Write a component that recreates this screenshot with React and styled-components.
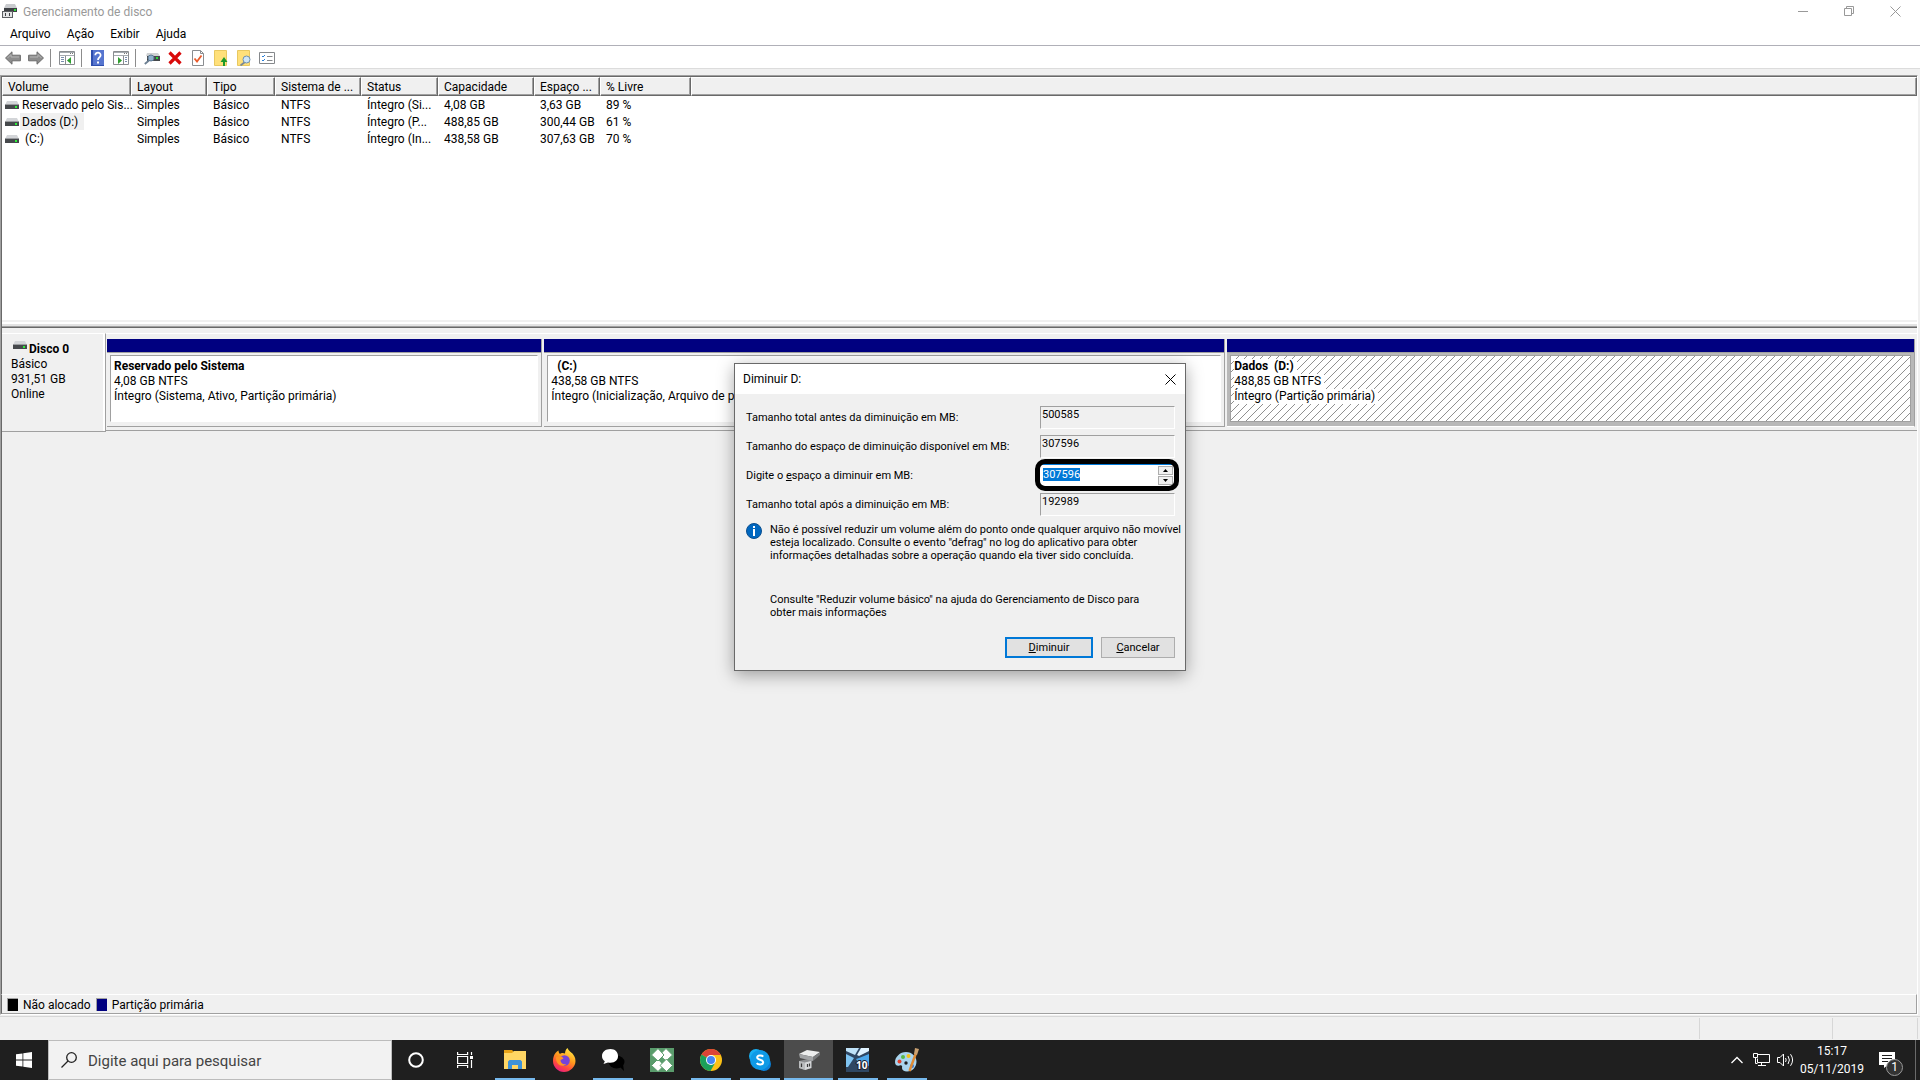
import React, { useEffect, useRef } from 'react';
import styled, { createGlobalStyle } from 'styled-components';

const GlobalStyle = createGlobalStyle`
  * {
    box-sizing: border-box;
  }

  body {
    margin: 0;
    background: #f0f0f0;
    color: #000;
    font-family: Roboto, 'Open Sans', sans-serif;
    font-size: 12px;
    overflow: hidden;
  }

  button, input {
    font-family: inherit;
    font-size: inherit;
    color: inherit;
    margin: 0;
    padding: 0;
    border: 0;
    border-radius: 0;
    background: none;
  }

  svg {
    display: block;
    flex: none;
  }
`;

const Desktop = styled.div`
  height: 100vh;
  display: flex;
  flex-direction: column;
`;

/* ---------- window chrome ---------- */

const TitleBar = styled.header`
  display: flex;
  align-items: center;
  height: 22px;
  padding: 0 2px;
  background: #fff;
  color: #999;
`;

const WindowTitle = styled.h1`
  flex: 1;
  margin: 0 0 0 5px;
  padding-top: 2px;
  font-size: 12px;
  font-weight: 400;
`;

const CaptionButton = styled.button`
  display: flex;
  align-items: center;
  justify-content: center;
  width: 46px;
  height: 20px;
`;

const MenuBar = styled.nav`
  display: flex;
  align-items: center;
  height: 24px;
  padding-left: 10px;
  gap: 16px;
  background: #fff;
  border-bottom: 1px solid #b0b0b8;
`;

const MenuItem = styled.button`
  line-height: 18px;
`;

const ToolBar = styled.div`
  display: flex;
  align-items: center;
  height: 23px;
  padding: 2px 0 0 1px;
  background: #fff;
  border-bottom: 1px solid #dcdcdc;
`;

const ToolButton = styled.button`
  display: flex;
  align-items: center;
  justify-content: center;
  width: 23px;
  height: 20px;
`;

const ToolDivider = styled.span`
  width: 1px;
  height: 18px;
  margin: 0 4px 0 3px;
  background: #8c8c8c;
`;

/* ---------- volume list ---------- */

const Frame = styled.main`
  flex: 1;
  min-height: 0;
  display: flex;
  flex-direction: column;
  margin-top: 6px;
  margin-right: 2px;
  border-top: 1px solid #a0a0a0;
  border-left: 1px solid #a0a0a0;
  border-right: 1px solid #fff;
  border-bottom: 1px solid #fff;
`;

const VolumePane = styled.section`
  flex: none;
  height: 244px;
  background: #fff;
  border-top: 1px solid #696969;
  border-left: 1px solid #696969;
`;

const VolumeTable = styled.table`
  width: 100%;
  table-layout: fixed;
  border-collapse: separate;
  border-spacing: 0;
`;

const HeadCell = styled.th`
  height: 19px;
  padding: 0 4px 0 5px;
  background: #f0f0f0;
  border-left: 1px solid #fff;
  border-top: 1px solid #fff;
  border-right: 1px solid #696969;
  border-bottom: 1px solid #696969;
  box-shadow: inset -1px -1px 0 #a0a0a0;
  font-weight: 400;
  line-height: 16px;
  text-align: left;
  white-space: nowrap;
`;

const Cell = styled.td`
  height: 17px;
  padding: ${(p) => (p.$first ? '0 0 0 3px' : '2px 0 0 6px')};
  line-height: 15px;
  white-space: pre;
`;

const VolumeName = styled.div`
  display: flex;
  align-items: center;
  gap: 1px;
`;

const NameText = styled.span`
  padding: 2px ${(p) => (p.$selected ? 6 : 0)}px 0 2px;
  background: ${(p) => (p.$selected ? '#f0f0f0' : 'transparent')};
`;

const Splitter = styled.div`
  flex: none;
  height: 8px;
  background: #f0f0f0;
  border-left: 1px solid #696969;
  border-bottom: 1px solid #696969;
  box-shadow: inset 0 -1px 0 #a0a0a0, inset 0 -3px 0 #e3e3e3, inset 0 -5px 0 #fff;
`;

/* ---------- disk map ---------- */

const DiskPane = styled.section`
  flex: 1;
  min-height: 0;
  padding-top: 5px;
  border-left: 1px solid #696969;
`;

const DiskRow = styled.div`
  display: flex;
  height: 99px;
`;

const DiskLabel = styled.div`
  width: 104px;
  padding: 7px 0 0 9px;
  border-top: 1px solid #fff;
  border-right: 1px solid #a0a0a0;
  border-bottom: 1px solid #a0a0a0;
  box-shadow: inset -2px 0 0 #fff;
  line-height: 15px;
`;

const DiskName = styled.div`
  display: flex;
  align-items: flex-start;
  gap: 2px;
  padding-left: 2px;
  line-height: 16px;
  font-weight: 700;
`;

const Partitions = styled.div`
  flex: 1;
  display: flex;
  gap: 2px;
  height: 98px;
  padding: 5px 2px 3px 1px;
  border-top: 1px solid #fff;
  border-bottom: 1px solid #a0a0a0;
`;

const Partition = styled.div`
  flex: ${(p) => p.$share} 1 0;
  min-width: 0;
  display: flex;
  flex-direction: column;
  border-bottom: 1px solid ${(p) => (p.$selected ? '#fff' : '#a0a0a0')};
  border-right: 1px solid #a0a0a0;
`;

const PartitionBar = styled.div`
  height: 13px;
  background: #000080;
`;

const PartitionBody = styled.div`
  flex: 1;
  padding: 2px 3px 4px 3px;
  border-top: 1px solid #a0a0a0;
  background: ${(p) => (p.$selected ? '#b8b8b8' : '#f0f0f0')};
`;

const PartitionInfo = styled.div`
  height: 100%;
  display: flex;
  flex-direction: column;
  align-items: flex-start;
  padding: 3px 0 0 3px;
  border: 1px solid #a0a0a0;
  border-right-color: ${(p) => (p.$selected ? '#a0a0a0' : '#fff')};
  border-bottom-color: ${(p) => (p.$selected ? '#a0a0a0' : '#fff')};
  background-color: #fff;
  background-image: ${(p) =>
    p.$selected
      ? 'linear-gradient(135deg, transparent 45%, #909090 45%, #909090 54%, transparent 54%)'
      : 'none'};
  background-size: 8px 8px;
  line-height: 15px;
  white-space: pre;
  overflow: hidden;
`;

const InfoLine = styled.span`
  padding-right: 3px;
  background: #fff;
  font-weight: ${(p) => (p.$strong ? 700 : 400)};
`;

const Legend = styled.footer`
  flex: none;
  display: flex;
  align-items: center;
  gap: 5px;
  height: 20px;
  padding: 1px 0 0 5px;
  border-left: 1px solid #696969;
  border-top: 1px solid #fff;
  border-bottom: 1px solid #a0a0a0;
  border-right: 1px solid #a0a0a0;
`;

const Swatch = styled.span`
  width: 11px;
  height: 13px;
  border-top: 1px solid #a0a0a0;
  border-left: 1px solid #a0a0a0;
  background: ${(p) => p.$color};
`;

const StatusBar = styled.div`
  flex: none;
  display: flex;
  justify-content: flex-end;
  height: 24px;
  margin-top: 1px;
  padding: 1px 2px 1px 0;
  border-top: 1px solid #d7d7d7;
`;

const StatusPart = styled.span`
  width: ${(p) => p.$width}px;
  border-right: 1px solid #d7d7d7;
`;

/* ---------- shrink dialog ---------- */

const Dialog = styled.form`
  position: absolute;
  top: 363px;
  left: 50%;
  transform: translateX(-50%);
  width: 452px;
  border: 1px solid #696969;
  background: #f0f0f0;
  box-shadow: 0 4px 16px rgba(0, 0, 0, 0.35);
  font-size: 11px;
`;

const DialogTitle = styled.div`
  display: flex;
  align-items: center;
  justify-content: space-between;
  height: 30px;
  padding: 0 9px 0 8px;
  background: #fff;
  font-size: 12px;
`;

const DialogBody = styled.div`
  padding: 12px 10px 12px 11px;
`;

const FieldGrid = styled.div`
  display: grid;
  grid-template-columns: 1fr 135px;
  row-gap: 6px;
`;

const FieldLabel = styled.label`
  line-height: 23px;
`;

const ReadOnlyField = styled.input`
  width: 100%;
  height: 23px;
  padding: 0 0 7px 1px;
  border: 1px solid #fff;
  border-top-color: #a0a0a0;
  border-left-color: #a0a0a0;
`;

const SpinField = styled.div`
  position: relative;
  display: flex;
  width: 134px;
  height: 22px;
  background: #fff;
  border-top: 1px solid #0078d7;

  &::after {
    content: '';
    position: absolute;
    inset: -6px -5px -5px;
    border: 5px solid #000;
    border-radius: 10px;
    pointer-events: none;
  }
`;

const SpinInput = styled.input`
  flex: 1;
  min-width: 0;
  padding: 0 0 3px 3px;
  outline: none;

  &::selection {
    background: #0078d7;
    color: #fff;
  }
`;

const SpinButtons = styled.div`
  display: flex;
  flex-direction: column;
  gap: 1px;
  padding: 1px;
`;

const SpinButton = styled.button`
  display: flex;
  align-items: center;
  justify-content: center;
  width: 15px;
  height: 9px;
  border: 1px solid #adadad;
  background: #f0f0f0;
`;

const Notice = styled.div`
  display: flex;
  gap: 8px;
  margin-top: 7px;
  line-height: 13px;
`;

const NoticeText = styled.div`
  flex: 1;

  p {
    margin: 0 0 31px;
    white-space: pre;
  }

  p:last-child {
    margin: 0;
  }
`;

const DialogActions = styled.div`
  display: flex;
  justify-content: flex-end;
  gap: 8px;
  margin-top: 18px;
`;

const DialogButton = styled.button`
  width: ${(p) => (p.$primary ? 88 : 74)}px;
  height: 21px;
  background: #e1e1e1;
  border: ${(p) => (p.$primary ? '2px solid #0078d7' : '1px solid #adadad')};
`;

/* ---------- taskbar ---------- */

const TaskBar = styled.footer`
  flex: none;
  display: flex;
  align-items: stretch;
  height: 40px;
  background: #1f1f1f;
  color: #fff;
`;

const TaskButton = styled.button`
  position: relative;
  display: flex;
  align-items: center;
  justify-content: center;
  width: ${(p) => p.$width || 49}px;
  background: ${(p) => (p.$active ? '#4c4c4c' : 'transparent')};

  &::after {
    content: '';
    position: absolute;
    bottom: 0;
    left: ${(p) => (p.$active ? 0 : 5)}px;
    right: ${(p) => (p.$active ? 0 : 4)}px;
    height: 2px;
    background: ${(p) => (p.$running ? '#76b9ed' : 'transparent')};
  }
`;

const SearchBox = styled.label`
  display: flex;
  align-items: center;
  gap: 11px;
  width: 344px;
  padding-left: 12px;
  background: #f2f2f2;
  border: 1px solid #bcbcbc;
`;

const SearchInput = styled.input`
  flex: 1;
  min-width: 0;
  padding-top: 2px;
  font-size: 15px;
  outline: none;

  &::placeholder {
    color: #444;
    opacity: 1;
  }
`;

const Tray = styled.div`
  display: flex;
  align-items: center;
  margin-left: auto;
`;

const TrayButton = styled.button`
  display: flex;
  align-items: center;
  justify-content: center;
  width: 24px;
  height: 40px;
`;

const Clock = styled.time`
  width: 70px;
  text-align: center;
  line-height: 18px;
`;

const ActionCenter = styled.button`
  position: relative;
  display: flex;
  align-items: center;
  justify-content: center;
  width: 40px;
  height: 40px;
`;

const Badge = styled.span`
  position: absolute;
  left: 19px;
  top: 19px;
  width: 17px;
  height: 17px;
  border: 1px solid #9a9a9a;
  border-radius: 50%;
  background: #333;
  font-size: 12px;
  line-height: 15px;
  text-align: center;
`;

const ShowDesktop = styled.button`
  width: 5px;
  margin-left: 8px;
  border-left: 1px solid #6a6a6a;
`;

/* ---------- icons ---------- */

const DriveIcon = () => (
  <svg width="14" height="8" viewBox="0 0 14 8">
    <path d="M2 0h10l2 4H0z" fill="#d3d5d8" />
    <path d="M0 3h14v5H0z" fill="#46494c" />
    <path d="M0 3h14v1H0z" fill="#9b9da0" />
    <path d="M10 5h2v2h-2z" fill="#2df03a" />
  </svg>
);

const AppIcon = () => (
  <svg width="16" height="16" viewBox="0 0 16 16">
    <path d="M4 1h9l2 4H2z" fill="#c9cbce" />
    <path d="M2 5h13v4H2z" fill="#3d4043" />
    <path d="M12 6h2v2h-2z" fill="#2bdc3a" />
    <path d="M0 8h11v7H0z" fill="#5c5f62" />
    <path d="M1 9h9v5H1z" fill="#e4e5e6" />
    <path d="M3 10h1v3H3zM7 10h1v3H7z" fill="#3d4043" />
  </svg>
);

const ArrowIcon = ({ right }) => (
  <svg width="16" height="14" viewBox="0 0 16 14">
    <path
      d={right ? 'M15.5 7L9 .8v3.4H.6v5.6H9v3.4z' : 'M.5 7L7 .8v3.4h8.4v5.6H7v3.4z'}
      fill="#8d8d8d"
      stroke="#6d6d6d"
    />
    <path d={right ? 'M2 6h8V3.5L13.5 7' : 'M14 6H6V3.5L2.5 7'} fill="none" stroke="#b5b5b5" />
  </svg>
);

const PaneIcon = ({ right }) => (
  <svg width="16" height="14" viewBox="0 0 16 14">
    <path d="M.5.5h15v13H.5z" fill="#fff" stroke="#8a8d90" />
    <path d="M1 1h14v1H1zM1 4h14v1H1z" fill="#a6abb0" />
    <path d="M11 2h1v1h-1zM13 2h1v1h-1z" fill="#777" />
    <path d={right ? 'M10.5 5v8' : 'M6.5 5v8'} stroke="#8a8d90" />
    <path
      d={right ? 'M12 6.5h2M12 8.5h2M12 10.5h2' : 'M2 6.5h3M2 8.5h3M2 10.5h3'}
      stroke="#7a8fae"
    />
    <path d={right ? 'M5 6l4 3.5L5 13z' : 'M12 6L8 9.5l4 3.5z'} fill="#2f9e2f" />
  </svg>
);

const HelpIcon = () => (
  <svg width="13" height="16" viewBox="0 0 13 16">
    <path d="M0 0h13v16H0z" fill="#2f4fae" />
    <path d="M2 0h11v15H2z" fill="#5675cf" />
    <path d="M4.3 5.2C4.3 1.8 9.8 2 9.6 5.2 9.5 7.4 7 7.4 7 10" fill="none" stroke="#fff" strokeWidth="1.8" />
    <path d="M6 11.5h2v2H6z" fill="#fff" />
  </svg>
);

const RescanIcon = () => (
  <svg width="16" height="14" viewBox="0 0 16 14">
    <path d="M3 2h11l2 3H2z" fill="#cfd1d3" />
    <path d="M3 5h13v5H3z" fill="#45484b" />
    <path d="M12 6h2v2h-2z" fill="#2bdc3a" />
    <path d="M5.5 9L.8 13" stroke="#6c7f92" strokeWidth="1.8" />
    <circle cx="7" cy="7" r="3" fill="#8fb0cd" stroke="#5f7b96" />
  </svg>
);

const DeleteIcon = () => (
  <svg width="14" height="14" viewBox="0 0 14 14">
    <path d="M1.5 1.5l11 11M12.5 1.5l-11 11" stroke="#d90a0a" strokeWidth="3.2" />
  </svg>
);

const CheckPageIcon = () => (
  <svg width="12" height="16" viewBox="0 0 12 16">
    <path d="M.5.5h8l3 3v12H.5z" fill="#fff" stroke="#8a8d90" />
    <path d="M8.5.5v3h3" fill="none" stroke="#8a8d90" />
    <path d="M2.5 8.5l2.5 3 4.5-6" fill="none" stroke="#ea5b2b" strokeWidth="1.8" />
  </svg>
);

const FolderUpIcon = () => (
  <svg width="14" height="16" viewBox="0 0 14 16">
    <path d="M.5.5h12v15H.5z" fill="#ffe07a" stroke="#e8c860" />
    <path d="M9 16v-4H6.5L10 7l3.500 5H11v4z" fill="#1d9a28" />
  </svg>
);

const FolderFindIcon = () => (
  <svg width="14" height="16" viewBox="0 0 14 16">
    <path d="M.5.5h12v15H.5z" fill="#ffe07a" stroke="#e8c860" />
    <path d="M8 12l-4.5 3.5" stroke="#7b8894" strokeWidth="1.8" />
    <circle cx="9.5" cy="9.5" r="3.5" fill="#cfe6f7" stroke="#6f90ad" />
  </svg>
);

const ListIcon = () => (
  <svg width="16" height="12" viewBox="0 0 16 12">
    <path d="M.5.5h15v11H.5z" fill="#fff" stroke="#85888b" />
    <path d="M8 4.5h5.5M8 8.5h5.5" stroke="#85888b" />
    <path d="M3 4l1 1 2-2M3 8l1 1 2-2" fill="none" stroke="#2b7fd6" />
  </svg>
);

const InfoIcon = () => (
  <svg width="16" height="16" viewBox="0 0 16 16">
    <circle cx="8" cy="8" r="7.5" fill="#0067c0" stroke="#0a4f8f" />
    <path d="M7 3h2v2H7zM7 6h2v7H7z" fill="#fff" />
  </svg>
);

const CloseIcon = ({ color }) => (
  <svg width="11" height="11" viewBox="0 0 11 11">
    <path d="M.5.5l10 10M10.5.5l-10 10" stroke={color} />
  </svg>
);

const MinimizeIcon = () => (
  <svg width="10" height="11" viewBox="0 0 10 11">
    <path d="M0 5.5h10" stroke="#999" />
  </svg>
);

const RestoreIcon = () => (
  <svg width="10" height="10" viewBox="0 0 10 10">
    <path d="M.5 2.5h7v7h-7zM2.5 2.5v-2h7v7h-2" fill="none" stroke="#999" />
  </svg>
);

const WindowsIcon = () => (
  <svg width="16" height="16" viewBox="0 0 16 16" fill="#fff">
    <path d="M0 2.3l6.5-.9v6.2H0zM7.3 1.3L16 0v7.6H7.3zM0 8.4h6.5v6.2L0 13.7zM7.3 8.4H16V16l-8.7-1.3z" />
  </svg>
);

const SearchIcon = () => (
  <svg width="16" height="16" viewBox="0 0 16 16" fill="none" stroke="#222" strokeWidth="1.3">
    <circle cx="10.5" cy="5.5" r="4.8" />
    <path d="M7 9L.5 15.5" />
  </svg>
);

const CortanaIcon = () => (
  <svg width="16" height="16" viewBox="0 0 16 16">
    <circle cx="8" cy="8" r="6.8" fill="none" stroke="#fff" strokeWidth="2" />
  </svg>
);

const TaskViewIcon = () => (
  <svg width="17" height="16" viewBox="0 0 17 16" fill="none" stroke="#fff" strokeWidth="1.2">
    <path d="M.6 0v2.5h10V0M.6 16v-2.5h10V16M.6 4.5h10v7H.6zM14.5 0v3M14.5 8v8" />
    <path d="M13 4h3v3h-3z" fill="#fff" stroke="none" />
  </svg>
);

const ExplorerIcon = () => (
  <svg width="22" height="20" viewBox="0 0 22 20">
    <path d="M0 0h8l2 2h12v17H0z" fill="#e8a317" />
    <path d="M0 3h8l2-2h12v18H0z" fill="#ffd664" />
    <path d="M4 11.5L5.5 10h11l1.5 1.5V19h-4v-4H8v4H4z" fill="#3e92d8" />
  </svg>
);

const FirefoxIcon = () => (
  <svg width="24" height="24" viewBox="0 0 24 24">
    <defs>
      <linearGradient id="fox" x1="0.8" y1="0" x2="0.3" y2="1">
        <stop offset="0" stopColor="#fff04a" />
        <stop offset="0.45" stopColor="#ff9a1c" />
        <stop offset="0.75" stopColor="#ff4a3d" />
        <stop offset="1" stopColor="#e81c80" />
      </linearGradient>
    </defs>
    <path
      d="M3.5 5C2 7 1 9.5 1 13c0 6 5 11 11 11s11.5-5 11.5-11c0-4-2-6-3.5-8 0 0-3-1.5-4.5-5-2 1.5-2.500 4-2.500 5.500C11 4.500 9 5 8 6 7 5 6.500 4 6.500 2.500 5.500 3 4.500 4 3.500 5z"
      fill="url(#fox)"
    />
    <circle cx="12.5" cy="12.5" r="5.3" fill="#7543d8" />
    <path d="M4 9c3-1.5 6-1 7.5 1.5L8.5 12c0 3 2.5 5 6 4-4 4-11 1-10.5-7z" fill="#ff9422" />
  </svg>
);

const ChatIcon = () => (
  <svg width="24" height="24" viewBox="0 0 24 24">
    <ellipse cx="15.5" cy="14" rx="8" ry="6.5" fill="#000" />
    <path d="M18 18l5 5-1-7z" fill="#000" />
    <path
      d="M9.5 1C4.5 1 1 3.8 1 8c0 2.4 1 4 2.8 5.2L2.5 16 7 14.5c6.500 1 10-2 10-6.500C17 3.800 14 1 9.500 1z"
      fill="#fff"
    />
  </svg>
);

const CloverIcon = () => (
  <svg width="24" height="24" viewBox="0 0 24 24">
    <path d="M0 0h24v24H0z" fill="#5a9c6c" />
    <g fill="#fff" stroke="#5a9c6c">
      <path d="M16 .5l6.5 6.500-6.500 6-6.500-6z" />
      <path d="M8 11l6 6.500L8 23.500l-6.500-6z" />
      <path d="M8 .5l6 6.500-6 6-6.500-6z" />
      <path d="M16.500 11l6 6.500-6 6-6.500-6z" />
    </g>
  </svg>
);

const ChromeIcon = () => (
  <svg width="22" height="22" viewBox="0 0 22 22">
    <circle cx="11" cy="11" r="11" fill="#fbc116" />
    <path d="M11 11L1.5 5.5A11 11 0 0 1 20.5 5.5L20.8 6H11z" fill="#dc4437" />
    <path d="M1.5 5.5A11 11 0 0 0 10.5 22l4.8-8.5L11 11z" fill="#1ba05a" />
    <circle cx="11" cy="11" r="5" fill="#fff" />
    <circle cx="11" cy="11" r="4" fill="#4686f3" />
  </svg>
);

const SkypeIcon = () => (
  <svg width="22" height="22" viewBox="0 0 22 22">
    <circle cx="7" cy="7" r="7" fill="#18b0f4" />
    <circle cx="15" cy="15" r="7" fill="#0a80d8" />
    <circle cx="11" cy="11" r="10" fill="#0f9ae6" />
    <path
      d="M14.2 7.6C13 6.2 8.2 6 8.2 8.6c0 2.8 6 1.6 6 4.7 0 3-5.2 2.6-6.5.9"
      fill="none"
      stroke="#fff"
      strokeWidth="2"
    />
  </svg>
);

const DiskManagerIcon = () => (
  <svg width="24" height="22" viewBox="0 0 24 22">
    <path d="M2 12l9-2 4 1v8l-7 2-6-2z" fill="#8d8f91" />
    <path d="M2 12l6 1.5V21l-6-2z" fill="#b9bbbd" />
    <path d="M8 13.500l6-1.500v7l-6 2z" fill="#d6d8da" />
    <path d="M4.500 14.500v3.500M10.500 15v3M12.500 14.500v3" stroke="#3a3a3a" strokeWidth="1.2" />
    <path d="M2 5l8-4 13 2-7 5z" fill="#eceded" />
    <path d="M2 5l14 3v4L3 9z" fill="#a2a4a6" />
    <path d="M16 8l7-5v3l-7 6z" fill="#77797b" />
  </svg>
);

const WindowsTenIcon = () => (
  <svg width="23" height="24" viewBox="0 0 23 24">
    <path d="M0 0h23v24H0z" fill="#2f4763" />
    <path d="M0 0h13L9 7 0 3z" fill="#bfe2f8" />
    <path d="M15 0h8v3L13 8l-2-1z" fill="#e0f3ff" />
    <path d="M0 6l8 4-6 9H0z" fill="#7fc4f2" />
    <path d="M10 11l3-1 10-4v12l-11-4z" fill="#4ba6ea" />
    <text
      x="10"
      y="21"
      fill="#fff"
      stroke="#223"
      strokeWidth="2"
      paintOrder="stroke"
      fontFamily="Open Sans"
      fontWeight="700"
      fontSize="10"
    >
      10
    </text>
  </svg>
);

const PaintIcon = () => (
  <svg width="24" height="24" viewBox="0 0 24 24">
    <path
      d="M11 4C5 4 0 9 0 14c0 4 3 4 4.5 3.5C7 17 7.5 18 7 20c0 2 2 3.5 5 3.5 6 0 9.500-5 9.500-10S17 4 11 4z"
      fill="#a9d4ee"
    />
    <circle cx="4.5" cy="13.5" r="2" fill="#e3422e" />
    <circle cx="8" cy="9" r="2" fill="#58b947" />
    <circle cx="13.5" cy="8" r="2" fill="#f5c21c" />
    <circle cx="11" cy="15" r="1.7" fill="#1f1f1f" />
    <circle cx="17" cy="18" r="2" fill="#3a74c9" />
    <path d="M21 5l-6.5 18" stroke="#e08b34" strokeWidth="2.4" />
    <path d="M20 0l4 1-2 6-3-1z" fill="#c9a070" />
  </svg>
);

const ChevronUpIcon = () => (
  <svg width="12" height="8" viewBox="0 0 12 8">
    <path d="M.5 7L6 1.5 11.5 7" fill="none" stroke="#fff" strokeWidth="1.3" />
  </svg>
);

const NetworkIcon = () => (
  <svg width="17" height="14" viewBox="0 0 17 14" fill="none" stroke="#fff">
    <path d="M4.5 1.5h12v8h-12v-4M8.5 9.5v3M5 12.5h8M2.5 5v5.5h2" />
    <path d="M.5.5h4v4h-4z" />
  </svg>
);

const VolumeIcon = () => (
  <svg width="17" height="14" viewBox="0 0 17 14" fill="none" stroke="#fff">
    <path d="M.5 4.5H3L6.5 1v12L3 9.5H.5zM8.5 5q1.4 2 0 4M11 3q2.8 4 0 8M13.5 1.2q4.2 5.8 0 11.6" />
  </svg>
);

const NotificationIcon = () => (
  <svg width="16" height="16" viewBox="0 0 16 16">
    <path d="M0 0h16v13H9l-4 3v-3H0z" fill="#fff" />
    <path d="M3 3.5h10M3 6.5h10M3 9.5h6" stroke="#1f1f1f" />
  </svg>
);

const Triangle = ({ down }) => (
  <svg width="5" height="3" viewBox="0 0 5 3">
    <path d={down ? 'M0 0h5L2.5 3z' : 'M0 3h5L2.5 0z'} fill="#000" />
  </svg>
);

/* ---------- data ---------- */

const columns = [
  { title: 'Volume', width: 129 },
  { title: 'Layout', width: 76 },
  { title: 'Tipo', width: 68 },
  { title: 'Sistema de ...', width: 86 },
  { title: 'Status', width: 77 },
  { title: 'Capacidade', width: 96 },
  { title: 'Espaço ...', width: 66 },
  { title: '% Livre', width: 91 },
  { title: '' },
];

const volumes = [
  ['Reservado pelo Sis...', 'Simples', 'Básico', 'NTFS', 'Íntegro (Si...', '4,08 GB', '3,63 GB', '89 %'],
  ['Dados (D:)', 'Simples', 'Básico', 'NTFS', 'Íntegro (P...', '488,85 GB', '300,44 GB', '61 %'],
  [' (C:)', 'Simples', 'Básico', 'NTFS', 'Íntegro (In...', '438,58 GB', '307,63 GB', '70 %'],
];

const partitions = [
  { name: 'Reservado pelo Sistema', size: '4,08 GB NTFS', status: 'Íntegro (Sistema, Ativo, Partição primária)', share: 435 },
  { name: '  (C:)', size: '438,58 GB NTFS', status: 'Íntegro (Inicialização, Arquivo de paginação, Despejo de falha, Partição primária)', share: 681 },
  { name: 'Dados  (D:)', size: '488,85 GB NTFS', status: 'Íntegro (Partição primária)', share: 688, selected: true },
];

const tools = [
  ['Voltar', <ArrowIcon />],
  ['Avançar', <ArrowIcon right />],
  null,
  ['Mostrar árvore', <PaneIcon />],
  null,
  ['Ajuda', <HelpIcon />],
  ['Mostrar ações', <PaneIcon right />],
  null,
  ['Examinar discos', <RescanIcon />],
  ['Excluir', <DeleteIcon />],
  ['Propriedades', <CheckPageIcon />],
  ['Abrir', <FolderUpIcon />],
  ['Explorar', <FolderFindIcon />],
  ['Lista', <ListIcon />],
];

const tasks = [
  { label: 'Cortana', icon: <CortanaIcon />, width: 48 },
  { label: 'Visão de tarefas', icon: <TaskViewIcon />, width: 50 },
  { label: 'Explorador de Arquivos', icon: <ExplorerIcon />, running: true },
  { label: 'Firefox', icon: <FirefoxIcon /> },
  { label: 'Chat', icon: <ChatIcon />, running: true },
  { label: 'Trevo', icon: <CloverIcon /> },
  { label: 'Chrome', icon: <ChromeIcon />, running: true },
  { label: 'Skype', icon: <SkypeIcon />, running: true },
  { label: 'Gerenciamento de disco', icon: <DiskManagerIcon />, running: true, active: true },
  { label: 'Windows 10', icon: <WindowsTenIcon />, running: true },
  { label: 'Paint', icon: <PaintIcon />, running: true },
];

const ShrinkDialog = () => {
  const amount = useRef(null);

  useEffect(() => {
    amount.current.focus();
    amount.current.select();
  }, []);

  return (
    <Dialog role="dialog" aria-label="Diminuir D:" onSubmit={(e) => e.preventDefault()}>
      <DialogTitle>
        <span>Diminuir D:</span>
        <button type="button" aria-label="Fechar">
          <CloseIcon color="#000" />
        </button>
      </DialogTitle>
      <DialogBody>
        <FieldGrid>
          <FieldLabel htmlFor="before">Tamanho total antes da diminuição em MB:</FieldLabel>
          <ReadOnlyField id="before" readOnly value="500585" />
          <FieldLabel htmlFor="available">Tamanho do espaço de diminuição disponível em MB:</FieldLabel>
          <ReadOnlyField id="available" readOnly value="307596" />
          <FieldLabel htmlFor="amount">
            Digite o <u>e</u>spaço a diminuir em MB:
          </FieldLabel>
          <SpinField>
            <SpinInput id="amount" ref={amount} defaultValue="307596" />
            <SpinButtons>
              <SpinButton type="button" aria-label="Aumentar">
                <Triangle />
              </SpinButton>
              <SpinButton type="button" aria-label="Reduzir">
                <Triangle down />
              </SpinButton>
            </SpinButtons>
          </SpinField>
          <FieldLabel htmlFor="after">Tamanho total após a diminuição em MB:</FieldLabel>
          <ReadOnlyField id="after" readOnly value="192989" />
        </FieldGrid>
        <Notice>
          <InfoIcon />
          <NoticeText>
            <p>
              {'Não é possível reduzir um volume além do ponto onde qualquer arquivo não movível\nesteja localizado. Consulte o evento "defrag" no log do aplicativo para obter\ninformações detalhadas sobre a operação quando ela tiver sido concluída.'}
            </p>
            <p>{'Consulte "Reduzir volume básico" na ajuda do Gerenciamento de Disco para\nobter mais informações'}</p>
          </NoticeText>
        </Notice>
        <DialogActions>
          <DialogButton $primary>
            <u>D</u>iminuir
          </DialogButton>
          <DialogButton type="button">
            <u>C</u>ancelar
          </DialogButton>
        </DialogActions>
      </DialogBody>
    </Dialog>
  );
};

const App = () => {
  return (
    <Desktop>
      <GlobalStyle />
      <TitleBar>
        <AppIcon />
        <WindowTitle>Gerenciamento de disco</WindowTitle>
        <CaptionButton aria-label="Minimizar">
          <MinimizeIcon />
        </CaptionButton>
        <CaptionButton aria-label="Restaurar">
          <RestoreIcon />
        </CaptionButton>
        <CaptionButton aria-label="Fechar janela">
          <CloseIcon color="#999" />
        </CaptionButton>
      </TitleBar>
      <MenuBar>
        <MenuItem>Arquivo</MenuItem>
        <MenuItem>Ação</MenuItem>
        <MenuItem>Exibir</MenuItem>
        <MenuItem>Ajuda</MenuItem>
      </MenuBar>
      <ToolBar>
        {tools.map((tool, i) =>
          tool ? (
            <ToolButton key={i} aria-label={tool[0]}>
              {tool[1]}
            </ToolButton>
          ) : (
            <ToolDivider key={i} />
          )
        )}
      </ToolBar>

      <Frame>
        <VolumePane>
          <VolumeTable>
            <colgroup>
              {columns.map((c, i) => (
                <col key={i} width={c.width} />
              ))}
            </colgroup>
            <thead>
              <tr>
                {columns.map((c, i) => (
                  <HeadCell key={i}>{c.title}</HeadCell>
                ))}
              </tr>
            </thead>
            <tbody>
              {volumes.map((row, r) => (
                <tr key={r}>
                  {row.map((value, i) =>
                    i === 0 ? (
                      <Cell key={i} $first>
                        <VolumeName>
                          <DriveIcon />
                          <NameText $selected={r === 1}>{value}</NameText>
                        </VolumeName>
                      </Cell>
                    ) : (
                      <Cell key={i}>{value}</Cell>
                    )
                  )}
                </tr>
              ))}
            </tbody>
          </VolumeTable>
        </VolumePane>
        <Splitter />
        <DiskPane>
          <DiskRow>
            <DiskLabel>
              <DiskName>
                <DriveIcon />
                Disco 0
              </DiskName>
              <div>Básico</div>
              <div>931,51 GB</div>
              <div>Online</div>
            </DiskLabel>
            <Partitions>
              {partitions.map((p) => (
                <Partition key={p.name} $share={p.share} $selected={p.selected}>
                  <PartitionBar />
                  <PartitionBody $selected={p.selected}>
                    <PartitionInfo $selected={p.selected}>
                      <InfoLine $strong>{p.name}</InfoLine>
                      <InfoLine>{p.size}</InfoLine>
                      <InfoLine>{p.status}</InfoLine>
                    </PartitionInfo>
                  </PartitionBody>
                </Partition>
              ))}
            </Partitions>
          </DiskRow>
        </DiskPane>
        <Legend>
          <Swatch $color="#000" />
          <span>Não alocado</span>
          <Swatch $color="#000080" />
          <span>Partição primária</span>
        </Legend>
      </Frame>
      <StatusBar>
        <StatusPart $width={133} />
        <StatusPart $width={133} />
        <StatusPart $width={85} />
      </StatusBar>

      <TaskBar>
        <TaskButton $width={48} aria-label="Iniciar">
          <WindowsIcon />
        </TaskButton>
        <SearchBox>
          <SearchIcon />
          <SearchInput placeholder="Digite aqui para pesquisar" />
        </SearchBox>
        {tasks.map((t) => (
          <TaskButton key={t.label} aria-label={t.label} $width={t.width} $running={t.running} $active={t.active}>
            {t.icon}
          </TaskButton>
        ))}
        <Tray>
          <TrayButton aria-label="Mostrar ícones ocultos">
            <ChevronUpIcon />
          </TrayButton>
          <TrayButton aria-label="Rede">
            <NetworkIcon />
          </TrayButton>
          <TrayButton aria-label="Volume">
            <VolumeIcon />
          </TrayButton>
          <Clock>
            <div>15:17</div>
            <div>05/11/2019</div>
          </Clock>
          <ActionCenter aria-label="Notificações">
            <NotificationIcon />
            <Badge>1</Badge>
          </ActionCenter>
        </Tray>
        <ShowDesktop aria-label="Mostrar área de trabalho" />
      </TaskBar>

      <ShrinkDialog />
    </Desktop>
  );
};

export default App;
